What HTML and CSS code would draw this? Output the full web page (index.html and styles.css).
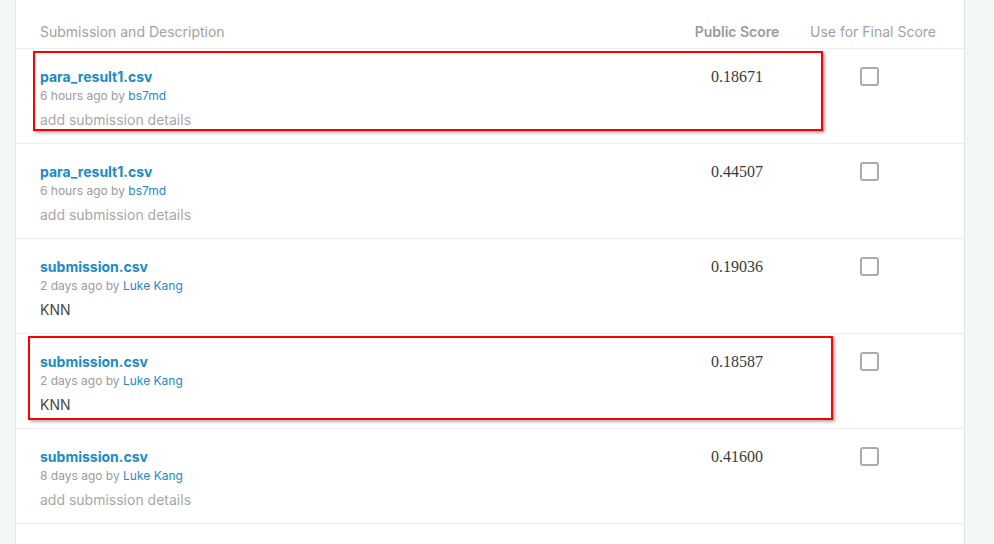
FILE: index.html
```html
<!DOCTYPE html>
<html>
<head>
<meta charset="utf-8">
<link rel="stylesheet" href="styles.css">
</head>
<body>
<div class="panel">
  <div class="row head">
    <div class="c-desc">Submission and Description</div>
    <div class="c-score"><b>Public Score</b></div>
    <div class="c-final">Use for Final Score</div>
  </div>
  <div class="row">
    <div class="c-desc">
      <a class="file">para_result1.csv</a>
      <div class="meta">6 hours ago by <a class="user">bs7md</a></div>
      <div class="desc empty">add submission details</div>
    </div>
    <div class="c-score score">0.18671</div>
    <div class="c-final"><span class="box"></span></div>
    <div class="mark mark1"></div>
  </div>
  <div class="row">
    <div class="c-desc">
      <a class="file">para_result1.csv</a>
      <div class="meta">6 hours ago by <a class="user">bs7md</a></div>
      <div class="desc empty">add submission details</div>
    </div>
    <div class="c-score score">0.44507</div>
    <div class="c-final"><span class="box"></span></div>
  </div>
  <div class="row">
    <div class="c-desc">
      <a class="file">submission.csv</a>
      <div class="meta">2 days ago by <a class="user">Luke Kang</a></div>
      <div class="desc">KNN</div>
    </div>
    <div class="c-score score">0.19036</div>
    <div class="c-final"><span class="box"></span></div>
  </div>
  <div class="row">
    <div class="c-desc">
      <a class="file">submission.csv</a>
      <div class="meta">2 days ago by <a class="user">Luke Kang</a></div>
      <div class="desc">KNN</div>
    </div>
    <div class="c-score score">0.18587</div>
    <div class="c-final"><span class="box"></span></div>
    <div class="mark mark2"></div>
  </div>
  <div class="row">
    <div class="c-desc">
      <a class="file">submission.csv</a>
      <div class="meta">8 days ago by <a class="user">Luke Kang</a></div>
      <div class="desc empty">add submission details</div>
    </div>
    <div class="c-score score">0.41600</div>
    <div class="c-final"><span class="box"></span></div>
  </div>
</div>
</body>
</html>
```
FILE: styles.css
```css
html, body {
  margin: 0;
  padding: 0;
  background: #f4f7f8;
  font-family: Inter, "Open Sans", sans-serif;
}
.panel {
  margin-left: 15px;
  width: 948px;
  height: 544px;
  background: #fff;
  border-left: 1px solid #e2e5e8;
  border-right: 1px solid #e2e5e8;
}
.row {
  position: relative;
  display: grid;
  grid-template-columns: 1fr 86px 156px;
  padding: 18px 28px 12px 24px;
  border-bottom: 1px solid #eceef0;
  height: 64px;
}
.row.head {
  padding: 23px 28px 7px 24px;
  height: 18px;
  font-size: 14px;
  line-height: 18px;
  color: #a2a2a2;
}
.head b { color: #9a9a9a; font-weight: 600; }
.c-score { text-align: center; }
.c-final { text-align: right; }
.file {
  display: block;
  font-size: 14px;
  line-height: 20px;
  font-weight: 700;
  color: #1c8ac6;
}
.meta {
  margin-top: 1px;
  font-size: 12px;
  line-height: 16px;
  color: #9c9c9c;
}
.user { color: #1c8ac6; }
.desc {
  margin-top: 6px;
  font-size: 14px;
  line-height: 20px;
  color: #4a4a4a;
}
.desc.empty { color: #a8a8a8; }
.score {
  font-family: "Liberation Serif", serif;
  font-size: 16px;
  line-height: 20px;
  color: #3a3a3a;
}
.c-final .box {
  display: inline-block;
  width: 15px;
  height: 15px;
  margin: 0 57px 0 0;
  border: 2px solid #ababab;
  border-radius: 3px;
}
.mark {
  position: absolute;
  border: 2px solid #f00;
  box-shadow: 2px 2px 3px rgba(0,0,0,0.3);
}
.mark1 { left: 17px; top: 2px; width: 786px; height: 76px; }
.mark2 { left: 12px; top: 2px; width: 801px; height: 80px; }
```
